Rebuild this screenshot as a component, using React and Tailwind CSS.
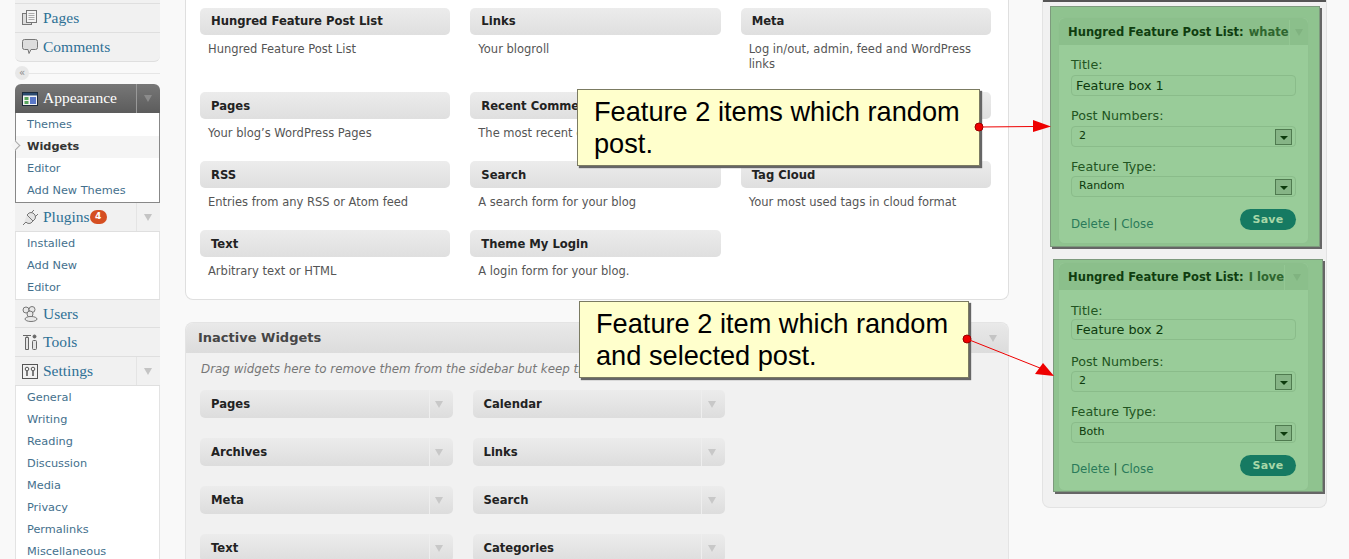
import React from "react";

const SERIF = "font-['Liberation_Serif',serif]";

// sidebar icons, drawn small like the wp-admin sprite
const PagesIcon = () => (
  <svg width="16" height="16" viewBox="0 0 16 16" fill="none" stroke="#777">
    <rect x="0.5" y="3.5" width="9" height="11" fill="#ddd" />
    <rect x="4.5" y="0.5" width="10" height="12" fill="#f4f4f4" />
    <path d="M6.5 3.5h6M6.5 5.5h6M6.5 7.5h6M6.5 9.5h6" stroke="#aaa" />
  </svg>
);
const CommentIcon = () => (
  <svg width="16" height="18" viewBox="0 0 16 18" fill="#ddd" stroke="#777">
    <path d="M2.5 1.5h11q2 0 2 2v6q0 2-2 2H9l-2 4-1-4H2.5q-2 0-2-2v-6q0-2 2-2z" />
  </svg>
);
const AppearanceIcon = () => (
  <svg width="16" height="14" viewBox="0 0 16 14">
    <rect x="0.5" y="0.5" width="15" height="13" fill="#f2f2f2" stroke="#1c2a3a" />
    <rect x="1" y="1" width="14" height="2.5" fill="#2b4a6f" />
    <rect x="2.5" y="5" width="4" height="3" fill="#58a55c" />
    <rect x="2.5" y="9" width="4" height="3" fill="#58a55c" />
    <rect x="8" y="5" width="6" height="7" fill="#5a78c8" />
  </svg>
);
const PluginIcon = () => (
  <svg width="17" height="17" viewBox="0 0 17 17" fill="#e4e4e4" stroke="#777" strokeLinejoin="round">
    <path d="M5 6l6 6-2 2q-2 1-4 0l-1-1-3 3M5 6l2-2q2-1 4 0l2 2q1 2 0 4l-2 2" />
    <path d="M9 4l3-3M13 8l3-3" />
  </svg>
);
const UsersIcon = () => (
  <svg width="18" height="16" viewBox="0 0 18 16" fill="#e8e8e8" stroke="#777">
    <circle cx="5" cy="4" r="3" />
    <circle cx="11" cy="3.5" r="3" />
    <circle cx="9" cy="8" r="3" />
    <ellipse cx="10" cy="13" rx="6" ry="2.5" />
  </svg>
);
const ToolsIcon = () => (
  <svg width="16" height="17" viewBox="0 0 16 17" fill="#e4e4e4" stroke="#666">
    <path d="M1 1.5h8M5 1.5v2M3.5 3.5h3v12h-3z" />
    <circle cx="12.5" cy="2.5" r="1.5" fill="#666" />
    <rect x="10.5" y="6.5" width="4" height="9" rx="1" />
  </svg>
);
const SettingsIcon = () => (
  <svg width="16" height="15" viewBox="0 0 16 15" fill="none" stroke="#555">
    <rect x="0.5" y="0.5" width="15" height="14" fill="#f2f2f2" />
    <circle cx="5" cy="5" r="1.8" />
    <path d="M5 7v5" strokeWidth="1.5" />
    <circle cx="11" cy="5" r="1.8" />
    <path d="M11 7v5" strokeWidth="1.5" />
  </svg>
);

const Tri = ({ className }) => (
  <span className={`block h-0 w-0 border-x-[4px] border-t-[7px] border-x-transparent ${className}`} />
);

const MenuHead = ({ icon, label, arrow, badge, rounded, line }) => (
  <div className={`flex h-[29px] items-center border-b border-[#dfdfdf] bg-[#f1f1f1] ${rounded || ""} ${line || ""}`}>
    <span className="flex w-[28px] shrink-0 justify-center pl-[2px]">{icon}</span>
    <span className={`${SERIF} text-[15.5px] text-[#2e7095]`}>{label}</span>
    {badge && (
      <span className="flex h-[14px] w-[17px] items-center justify-center rounded-full bg-[#d54e21] text-[9px] font-bold text-white">
        {badge}
      </span>
    )}
    {arrow && (
      <span className="ml-auto flex h-full w-[24px] items-center justify-center border-l border-[#e4e4e4] pr-[1px]">
        <Tri className="border-t-[#c4c4c4]" />
      </span>
    )}
  </div>
);

const SubList = ({ items }) => (
  <div className="border-x border-[#e3e3e3] bg-white pt-[1px]">
    {items.map((t) => (
      <div key={t} className="flex h-[22px] items-center pl-[11px] text-[11.3px] text-[#44708d]">
        {t}
      </div>
    ))}
  </div>
);

const Sidebar = () => (
  <div className="ml-[15px] w-[145px] shrink-0 font-['DejaVu_Sans',sans-serif]">
    <div className="h-[4px] border-b border-[#dfdfdf] bg-[#f1f1f1]" />
    <MenuHead icon={<PagesIcon />} label="Pages" />
    <MenuHead icon={<CommentIcon />} label="Comments" rounded="rounded-b-md" />
    <div className="relative flex h-[22px] items-center">
      <div className="h-px w-full bg-[#e6e6e6]" />
      <span className="absolute left-0 top-[4px] flex h-[14px] w-[14px] items-center justify-center rounded-full bg-[#e8e8e8] text-[10px] leading-none text-[#888]">
        «
      </span>
    </div>
    <div className="flex h-[29px] items-center rounded-t-md bg-gradient-to-b from-[#777] to-[#5c5c5c]">
      <span className="flex w-[28px] shrink-0 justify-center pl-[2px]">
        <AppearanceIcon />
      </span>
      <span className={`${SERIF} pb-[1px] text-[15.5px] text-white`}>Appearance</span>
      <span className="ml-auto flex h-full w-[24px] items-center justify-center border-l border-[#999] pr-[1px]">
        <Tri className="border-t-[#8b8b8b]" />
      </span>
    </div>
    <div className="relative border border-t-0 border-[#888] bg-white pt-[1px]">
      <div className="flex h-[22px] items-center pl-[11px] text-[11.3px] text-[#44708d]">Themes</div>
      <div className="flex h-[22px] items-center bg-[#f5f5f5] pl-[11px] text-[11.3px] font-bold text-[#333]">Widgets</div>
      <div className="flex h-[22px] items-center pl-[11px] text-[11.3px] text-[#44708d]">Editor</div>
      <div className="flex h-[22px] items-center pl-[11px] text-[11.3px] text-[#44708d]">Add New Themes</div>
      <span className="absolute -left-[4px] top-[29px] h-[7px] w-[7px] rotate-45 border-r border-t border-[#aaa] bg-[#f5f5f5]" />
    </div>
    <MenuHead icon={<PluginIcon />} label="Plugins" arrow badge="4" />
    <SubList items={["Installed", "Add New", "Editor"]} />
    <MenuHead icon={<UsersIcon />} label="Users" line="border-t" />
    <MenuHead icon={<ToolsIcon />} label="Tools" />
    <MenuHead icon={<SettingsIcon />} label="Settings" arrow />
    <SubList items={["General", "Writing", "Reading", "Discussion", "Media", "Privacy", "Permalinks", "Miscellaneous"]} />
  </div>
);

const available = [
  ["Hungred Feature Post List", "Hungred Feature Post List"],
  ["Links", "Your blogroll"],
  ["Meta", "Log in/out, admin, feed and WordPress links"],
  ["Pages", "Your blog’s WordPress Pages"],
  ["Recent Comments", "The most recent comments"],
  ["Recent Posts", "The most recent posts on your site"],
  ["RSS", "Entries from any RSS or Atom feed"],
  ["Search", "A search form for your blog"],
  ["Tag Cloud", "Your most used tags in cloud format"],
  ["Text", "Arbitrary text or HTML"],
  ["Theme My Login", "A login form for your blog."],
];

const inactive = ["Pages", "Calendar", "Archives", "Links", "Meta", "Search", "Text", "Categories"];

const Main = () => (
  <div className="ml-[25px] w-[824px] shrink-0 font-['DejaVu_Sans',sans-serif]">
    <div className="grid grid-cols-3 gap-x-[20px] rounded-b-lg border border-t-0 border-[#dfdfdf] bg-white pl-[14px] pr-[17px] pt-[8px]">
      {available.map(([name, desc], i) => (
        <div key={name} className="pb-[20px]">
          <div
            className={`flex h-[27px] items-center rounded-[5px] bg-gradient-to-b from-[#ececec] to-[#dfdfdf] pl-[11px] text-[11.6px] font-bold text-[#222] ${
              i < 3 ? "" : "pt-[2px]"
            }`}
          >
            {name}
          </div>
          <p className="mt-[7px] px-[8px] text-[11.5px] leading-[15px] text-[#555]">{desc}</p>
        </div>
      ))}
    </div>
    <div className="mt-[22px] rounded-t-lg border border-b-0 border-[#e4e4e4] bg-[#f1f1f1]">
      <div className="flex h-[30px] items-center rounded-t-lg bg-gradient-to-b from-[#e9e9e9] to-[#dcdcdc] pl-[12px] text-[13px] font-bold text-[#464646]">
        Inactive Widgets
        <span className="ml-auto mr-[11px]">
          <Tri className="border-t-[#c4c4c4]" />
        </span>
      </div>
      <p className="pl-[15px] pt-[9px] text-[11.9px] italic leading-[15px] text-[#777]">
        Drag widgets here to remove them from the sidebar but keep their settings.
      </p>
      <div className="mt-[13px] grid w-[539px] grid-cols-2 gap-x-[20px] gap-y-[20px] pl-[14px]">
        {inactive.map((name) => (
          <div
            key={name}
            className="flex h-[28px] items-center rounded-[5px] bg-gradient-to-b from-[#ececec] to-[#dddddd] pl-[11px] text-[11.6px] font-bold text-[#222]"
          >
            <span className="pt-[2px]">{name}</span>
            <span className="ml-auto flex h-full w-[24px] items-center justify-center border-l border-[#eee] pr-[4px]">
              <Tri className="border-t-[#c8c8c8]" />
            </span>
          </div>
        ))}
      </div>
    </div>
  </div>
);

const GreenField = ({ label, value, select, gap, inputGap }) => (
  <div className={gap}>
    <div className="text-[12.7px] leading-[14px] text-[#225522]">{label}</div>
    <div
      className={`flex h-[21px] items-center justify-between rounded-[4px] border border-[#8abc8a] bg-[#98cb98] pl-[4px] pr-[2px] text-[11px] text-[#0d3a0d] ${inputGap}`}
    >
      <span className={select ? "pl-[3px]" : "text-[12.8px]"}>{value}</span>
      {select && (
        <span className="mr-[1px] flex h-[16px] w-[17px] items-center justify-center border border-[#4f7a4f] bg-[#86b486]">
          <span className="mt-[2px] block h-0 w-0 border-x-[4px] border-t-[4px] border-x-transparent border-t-[#0d3a0d]" />
        </span>
      )}
    </div>
  </div>
);

const GreenBox = ({ title, box, type, className, top, gaps, inputGaps, bottom, linksTop, footGap }) => (
  <div className={`border border-[#7d9a7d] bg-[#8fc38f] shadow-[2px_2px_0_#666] ${className}`}>
    <div className="rounded-md border border-[#8fc18f] bg-[#99cc99]">
      <div className="flex h-[27px] items-center rounded-t-md bg-[#8bbf8b] pl-[9px] pt-[2px]">
        <span className="whitespace-nowrap text-[11.55px] font-bold text-[#0f3d0f]">Hungred Feature Post List:</span>
        <span className="ml-[5px] whitespace-nowrap text-[11.5px] font-bold text-[#2f662f]">{title}</span>
        <span className="ml-auto flex h-full w-[24px] items-center justify-center border-l border-[#93c793]">
          <Tri className="border-t-[#80b380]" />
        </span>
      </div>
      <div className={`px-[12px] ${top} ${bottom}`}>
        <GreenField label="Title:" value={box} inputGap={inputGaps[0]} />
        <GreenField label="Post Numbers:" value="2" select gap={gaps[0]} inputGap={inputGaps[1]} />
        <GreenField label="Feature Type:" value={type} select gap={gaps[1]} inputGap={inputGaps[2]} />
        <div className={`flex items-center justify-between text-[11.8px] ${footGap}`}>
          <span className={`text-[#2a7a5a] ${linksTop}`}>
            Delete <span className="text-[#225522]">|</span> Close
          </span>
          <span className="flex h-[21px] w-[56px] items-center justify-center rounded-full bg-[#167a62] text-[11px] font-bold tracking-wide text-[#a8d8a8]">
            Save
          </span>
        </div>
      </div>
    </div>
  </div>
);

const Right = () => (
  <div className="ml-[33px] h-[508px] w-[285px] shrink-0 rounded-b-lg border border-t-0 border-[#e3e3e3] bg-[#f1f1f1] font-['DejaVu_Sans',sans-serif]">
    <div className="h-[2px] bg-[#555]" />
    <GreenBox
      title="whate"
      box="Feature box 1"
      type="Random"
      className="ml-[7px] mt-[4px] h-[241px] w-[270px] pl-[7px] pr-[10px] pt-[10px]"
      top="pt-[13px]"
      bottom="pb-[9px]"
      gaps={["mt-[13px]", "mt-[13px]"]}
      inputGaps={["mt-[3px]", "mt-[3px]", "mt-[2px]"]}
      linksTop="pt-[10px]"
      footGap="mt-[9px]"
    />
    <GreenBox
      title="I love"
      box="Feature box 2"
      type="Both"
      className="ml-[10px] mt-[12px] h-[233px] w-[270px] pl-[4px] pr-[13px] pt-[2px]"
      top="pt-[14px]"
      bottom="pb-[11px]"
      gaps={["mt-[15px]", "mt-[13px]"]}
      inputGaps={["mt-[1px]", "mt-[2px]", "mt-[3px]"]}
      linksTop="pt-[8px]"
      footGap="mt-[10px]"
    />
  </div>
);

const Callout = ({ className, children }) => (
  <div
    className={`absolute border border-[#7b7b62] bg-[#ffffcc] pl-[16px] font-['Liberation_Sans',sans-serif] text-[27.2px] leading-[32px] text-black shadow-[2px_2px_1px_#666] ${className}`}
  >
    {children}
  </div>
);

export default function App() {
  return (
    <div className="relative flex h-[559px] w-[1349px] items-start overflow-hidden bg-[#f9f9f9]">
      <Sidebar />
      <Main />
      <Right />

      <Callout className="left-[577px] top-[89px] h-[77px] w-[403px] pt-[6px]">
        Feature 2 items which random
        <br />
        post.
      </Callout>
      <Callout className="left-[579px] top-[301px] h-[77px] w-[390px] pt-[6px]">
        Feature 2 item which random
        <br />
        and selected post.
      </Callout>

      {/* red pointer arrows of the annotations */}
      <svg className="absolute left-0 top-0" width="1349" height="559" fill="#ee0000">
        <circle cx="979" cy="127" r="4" stroke="#990000" />
        <line x1="979" y1="127" x2="1035" y2="126.5" stroke="#ee0000" />
        <path d="M1033 120L1051 126.5 1033 132z" />
        <circle cx="967" cy="339" r="4" stroke="#990000" />
        <line x1="967" y1="339" x2="1040" y2="368" stroke="#ee0000" />
        <path d="M1043 363L1054 376 1035 374z" />
      </svg>
    </div>
  );
}
